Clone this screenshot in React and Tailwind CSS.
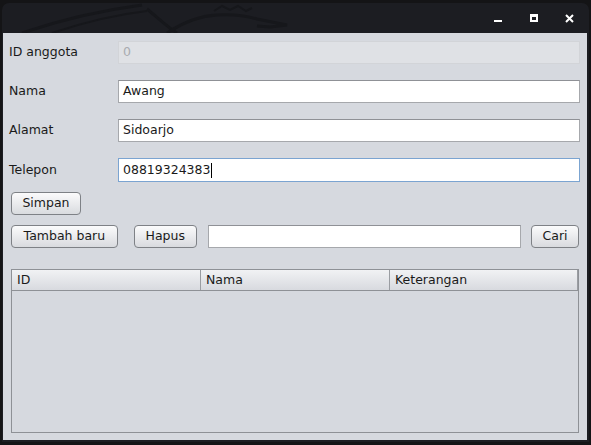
import React from 'react';

const font = { fontFamily: '"DejaVu Sans", Verdana, sans-serif' };

const Field = ({ value, disabled, focused, caret }) => (
  <div
    className={
      'h-[23px] flex items-center pl-[4px] text-[12.5px] ' +
      (disabled
        ? 'bg-[#dfe1e5] border border-[#d2d4d8] text-[#a9abb0]'
        : focused
        ? 'bg-white border border-[#7ba4d1] text-[#1a1a1a] h-[24px]'
        : 'bg-white border border-[#a6a8ac] border-t-[#8f9196] text-[#1a1a1a]')
    }
  >
    <span>{value}</span>
    {caret && <span className="w-px h-[15px] bg-black ml-[1px]" />}
  </div>
);

const Button = ({ children, w }) => (
  <button
    className={
      'h-[23px] rounded-[4px] border border-[#7e8186] bg-gradient-to-b from-[#fbfbfc] to-[#d9dbdf] text-[12.5px] text-[#1a1a1a] flex items-center justify-center ' +
      w
    }
  >
    {children}
  </button>
);

export default function App() {
  return (
    <div className="w-[591px] h-[445px] bg-[#141416] pt-[3px] px-[2px] overflow-hidden" style={font}>
      <div className="h-[439px] bg-[#1c1d22] rounded-t-[7px] flex flex-col">
        {/* title bar */}
        <div className="h-[30px] relative shrink-0">
          {/* faint dragon watermark */}
          <svg className="absolute left-0 top-0" width="300" height="30" viewBox="0 0 300 30" fill="none">
            <path d="M20 30 C 55 18, 95 8, 140 2" stroke="#16171b" strokeWidth="3" />
            <path d="M50 30 C 80 20, 110 12, 145 8" stroke="#16171b" strokeWidth="2" />
            <path d="M145 6 C 155 14, 165 24, 175 30" stroke="#16171b" strokeWidth="3" />
            <path d="M165 30 C 180 20, 195 13, 215 12 C 230 11, 245 13, 255 16 L 285 22 L 268 24 L 255 23" stroke="#16171b" strokeWidth="3" />
            <path d="M212 8 L 220 3 L 228 7 L 236 3 L 244 8 L 250 5" stroke="#16171b" strokeWidth="2" />
          </svg>
          <div className="absolute left-[492px] top-[17px] w-[8px] h-[2px] bg-white" />
          <div className="absolute left-[528px] top-[11px] w-[8px] h-[8px] border-2 border-t-[3px] border-white" />
          <svg className="absolute left-[563px] top-[11px]" width="9" height="9" viewBox="0 0 9 9">
            <path d="M1 1 L8 8 M8 1 L1 8" stroke="white" strokeWidth="2" />
          </svg>
        </div>
        {/* content */}
        <div className="ml-px mr-[2px] h-[407px] bg-[#d6d9df] flex flex-col px-[8px] pt-[8px] text-[#1a1a1a]">
          <div className="grid grid-cols-[107px_462px] gap-y-[16px] items-center text-[12.5px]">
            <span className="-ml-[2px]">ID anggota</span>
            <Field value="0" disabled />
            <span className="-ml-[2px]">Nama</span>
            <Field value="Awang" />
            <span className="-ml-[2px]">Alamat</span>
            <Field value="Sidoarjo" />
            <span className="-ml-[2px]">Telepon</span>
            <Field value="08819324383" focused caret />
          </div>
          <div className="mt-[10px]">
            <Button w="w-[70px]">Simpan</Button>
          </div>
          <div className="mt-[10px] flex items-center">
            <Button w="w-[107px]">Tambah baru</Button>
            <div className="ml-[16px]">
              <Button w="w-[63px]">Hapus</Button>
            </div>
            <div className="ml-[11px] w-[314px] h-[23px] bg-white border border-[#a6a8ac] border-t-[#8f9196]" />
            <div className="ml-[10px]">
              <Button w="w-[48px]">Cari</Button>
            </div>
          </div>
          <div className="mt-[21px] w-[568px] h-[164px] border border-[#8e9196] bg-[#d6d9df] flex flex-col">
            <div className="h-[21px] grid grid-cols-[189px_189px_1fr] border-b border-[#8e9196] bg-gradient-to-b from-[#f1f2f4] to-[#d8dadf] text-[12.5px]">
              <div className="border-r border-[#9a9da2] pl-[5px] flex items-center">ID</div>
              <div className="border-r border-[#9a9da2] pl-[5px] flex items-center">Nama</div>
              <div className="border-r border-[#9a9da2] pl-[5px] flex items-center">Keterangan</div>
            </div>
          </div>
        </div>
      </div>
    </div>
  );
}
